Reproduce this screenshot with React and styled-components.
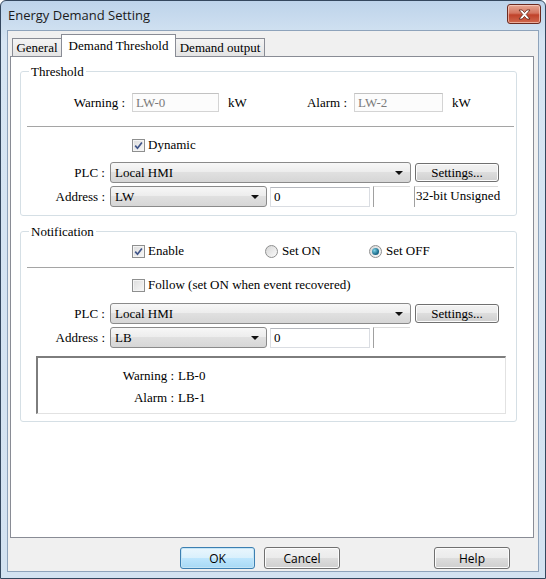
import styled, { createGlobalStyle } from 'styled-components';

const uiFont = `"Open Sans", "Noto Sans", sans-serif`;

const GlobalStyle = createGlobalStyle`
	html, body {
		margin: 0;
		padding: 0;
		background: #fff;
	}
	* {
		box-sizing: border-box;
	}
`;

const Window = styled.div`
	width: 546px;
	height: 579px;
	display: flex;
	flex-direction: column;
	border: 1px solid #34475e;
	border-radius: 6px 6px 0 0;
	background: linear-gradient(#bdd3ea, #d6e5f3 40px, #d3e2f1);
	overflow: hidden;
`;

const TitleBar = styled.div`
	height: 29px;
	flex: none;
	display: flex;
	justify-content: space-between;
	padding: 0 4px 0 7px;
`;

const Title = styled.span`
	font-family: ${uiFont};
	font-size: 13px;
	line-height: 29px;
	color: #1b1b1b;
`;

const CloseButton = styled.div`
	width: 34px;
	height: 20px;
	margin-top: 3px;
	display: flex;
	align-items: center;
	justify-content: center;
	border: 1px solid #6b2a20;
	border-radius: 3px;
	background: linear-gradient(#e6a793, #d47560 45%, #c0422a 55%, #d0694f);
	box-shadow: inset 0 0 0 1px rgba(255, 220, 210, 0.6);
`;

const Client = styled.div`
	flex: 1;
	margin: 0 6px 6px 6px;
	border: 1px solid #8ea3bb;
	background: #f0f0f0;
	display: flex;
	flex-direction: column;
	padding: 3px 4px 0 2px;
	font-family: 'Liberation Serif', 'Times New Roman', serif;
	font-size: 13px;
	color: #000;
`;

const TabStrip = styled.div`
	height: 23px;
	flex: none;
	display: flex;
	align-items: flex-end;
	padding-left: 2px;
	margin-bottom: -1px;
	position: relative;
	z-index: 1;
`;

const Tab = styled.div`
	width: ${(p) => p.$w}px;
	height: ${(p) => (p.$active ? 23 : 18)}px;
	margin-bottom: ${(p) => (p.$active ? 0 : 1)}px;
	display: flex;
	justify-content: center;
	align-items: ${(p) => (p.$active ? 'flex-start' : 'center')};
	padding-top: ${(p) => (p.$active ? 3 : 0)}px;
	border: 1px solid #898c95;
	border-bottom: none;
	border-left-style: ${(p) => (p.$noLeft ? 'none' : 'solid')};
	border-right-style: ${(p) => (p.$noRight ? 'none' : 'solid')};
	background: ${(p) => (p.$active ? '#fff' : 'linear-gradient(#f4f4f4, #e4e4e4)')};
	line-height: 15px;
	white-space: nowrap;
`;

const Panel = styled.div`
	height: 482px;
	flex: none;
	border: 1px solid #898c95;
	background: #fff;
	padding: 7px 16px 0 9px;
`;

const Group = styled.fieldset`
	margin: ${(p) => p.$mt || 0}px 0 0 0;
	padding: 0 0 ${(p) => p.$pb}px 0;
	min-width: 0;
	border: 1px solid #d5dfe5;
	border-radius: 3px;
`;

const Legend = styled.legend`
	margin-left: 8px;
	padding: 0 2px;
	line-height: 15px;
`;

const Row = styled.div`
	display: flex;
	align-items: center;
	height: ${(p) => p.$h || 21}px;
	margin-top: ${(p) => p.$mt || 0}px;
	padding-left: ${(p) => p.$pl || 0}px;
	white-space: nowrap;
`;

const Separator = styled.div`
	height: 2px;
	margin: ${(p) => p.$mt}px 2px 0 6px;
	border-top: 1px solid #a5a5a5;
	border-bottom: 1px solid #fff;
`;

const Label = styled.span`
	width: ${(p) => p.$w}px;
	flex: none;
	text-align: right;
	margin-right: ${(p) => p.$gap ?? 5}px;
`;

const Unit = styled.span`
	width: 20px;
	flex: none;
	margin-left: 9px;
`;

const TextBox = styled.div`
	width: ${(p) => p.$w}px;
	height: ${(p) => p.$h || 19}px;
	flex: none;
	margin-left: ${(p) => p.$ml || 0}px;
	display: flex;
	align-items: center;
	padding-left: 3px;
	background: ${(p) => (p.$disabled ? '#fcfcfc' : '#fff')};
	color: ${(p) => (p.$disabled ? '#7b7b7b' : '#000')};
	border: 1px solid ${(p) => (p.$disabled ? '#d4d4d4' : '#dadde2')};
	border-top-color: ${(p) => (p.$disabled ? '#c2c2c2' : '#b4b7bd')};
`;

const Static = styled.div`
	width: ${(p) => p.$w}px;
	height: 21px;
	flex: none;
	margin-left: ${(p) => p.$ml || 0}px;
	border-left: 1px solid #a0a0a0;
	border-top: 1px solid #dcdcdc;
	line-height: 17px;
	padding-left: 1px;
`;

const Combo = styled.div`
	width: ${(p) => p.$w}px;
	height: 21px;
	flex: none;
	display: flex;
	align-items: center;
	justify-content: space-between;
	padding: 0 7px 0 4px;
	border: 1px solid #8a8a8a;
	border-radius: 3px;
	background: linear-gradient(#f7f7f7, #ececec 50%, #e0e0e0 50%, #d6d6d6);
`;

const Arrow = styled.span`
	width: 0;
	height: 0;
	border-left: 4px solid transparent;
	border-right: 4px solid transparent;
	border-top: 4px solid #111;
`;

const Button = styled.div`
	width: ${(p) => p.$w}px;
	height: ${(p) => p.$h || 22}px;
	flex: none;
	margin-left: ${(p) => (p.$ml === 'auto' ? 'auto' : `${p.$ml || 0}px`)};
	display: flex;
	align-items: center;
	justify-content: center;
	border: 1px solid ${(p) => (p.$primary ? '#3c7fb1' : '#707070')};
	border-radius: 3px;
	background: ${(p) =>
		p.$primary
			? 'linear-gradient(#eaf6fd, #d9f0fc 50%, #bee6fd 50%, #a7d9f5)'
			: 'linear-gradient(#f2f2f2, #ebebeb 50%, #dddddd 50%, #cfcfcf)'};
	box-shadow: inset 0 0 0 1px ${(p) => (p.$primary ? '#c4e5f6' : '#fcfcfc')};
	color: #000;
`;

const DialogButton = styled(Button)`
	font-family: ${uiFont};
	font-size: 12px;
`;

const Option = styled.label`
	display: flex;
	align-items: center;
	width: ${(p) => (p.$w ? `${p.$w}px` : 'auto')};
	flex: none;
`;

const Box = styled.span`
	width: 13px;
	height: 13px;
	flex: none;
	margin-right: 3px;
	display: flex;
	align-items: center;
	justify-content: center;
	border: 1px solid #8e8f8f;
	background: linear-gradient(135deg, #dcdcdc, #f8f8f8);
	box-shadow: inset 0 0 0 1px #f4f4f4;
`;

const Round = styled.span`
	width: 13px;
	height: 13px;
	flex: none;
	margin-right: 4px;
	display: flex;
	align-items: center;
	justify-content: center;
	border: 1px solid #8e8f8f;
	border-radius: 50%;
	background: linear-gradient(135deg, #d6d6d6, #fbfbfb);
`;

const Dot = styled.span`
	width: 7px;
	height: 7px;
	border-radius: 50%;
	background: radial-gradient(circle at 35% 35%, #7fd3e6, #1d6f8f 60%, #0f4a66);
`;

const InfoBox = styled.div`
	width: 470px;
	height: 58px;
	margin: 8px 0 0 15px;
	border-style: solid;
	border-width: 2px 1px 1px 2px;
	border-color: #7d7d7d #e2e2e2 #e2e2e2 #7d7d7d;
	padding-top: 7px;
	display: grid;
	grid-template-columns: 136px auto;
	grid-auto-rows: 22px;
	column-gap: 4px;
	align-items: center;
	align-content: start;
`;

const InfoLabel = styled.span`
	text-align: right;
`;

const ButtonRow = styled.div`
	display: flex;
	margin-top: 9px;
	padding: 0 24px 0 170px;
`;

const Check = ({ checked }) => (
	<Box>
		{checked && (
			<svg width="9" height="9" viewBox="0 0 9 9">
				<path d="M1.2 4.6 L3.5 7.2 L7.9 1.4" stroke="#41568a" strokeWidth="1.7" fill="none" />
			</svg>
		)}
	</Box>
);

const Radio = ({ checked }) => <Round>{checked && <Dot />}</Round>;

const AddressRows = ({ device }) => (
	<>
		<Row $mt={device === 'LW' ? 9 : 10}>
			<Label $w={84}>PLC :</Label>
			<Combo $w={301}>
				<span>Local HMI</span>
				<Arrow />
			</Combo>
			<Button $w={84} $h={19} $ml={4}>
				Settings...
			</Button>
		</Row>
		<Row $mt={3}>
			<Label $w={84}>Address :</Label>
			<Combo $w={157}>
				<span>{device}</span>
				<Arrow />
			</Combo>
			<TextBox $w={100} $h={20} $ml={3}>
				0
			</TextBox>
			<Static $w={37} $ml={3} />
			{device === 'LW' && (
				<Static $w={84} $ml={4}>
					32-bit Unsigned
				</Static>
			)}
		</Row>
	</>
);

function App() {
	return (
		<>
			<GlobalStyle />
			<Window>
				<TitleBar>
					<Title>Energy Demand Setting</Title>
					<CloseButton>
						<svg width="13" height="11" viewBox="0 0 13 11">
							<path
								d="M1 1 H4.2 L6.5 3.6 L8.8 1 H12 L8.2 5.5 L12 10 H8.8 L6.5 7.4 L4.2 10 H1 L4.8 5.5 Z"
								fill="#fff"
								stroke="#5a2418"
								strokeWidth="0.8"
								strokeLinejoin="round"
							/>
						</svg>
					</CloseButton>
				</TitleBar>

				<Client>
					<TabStrip>
						<Tab $w={49} $noRight>
							General
						</Tab>
						<Tab $w={115} $active>
							Demand Threshold
						</Tab>
						<Tab $w={89} $noLeft>
							Demand output
						</Tab>
					</TabStrip>

					<Panel>
						<Group $pb={8}>
							<Legend>Threshold</Legend>
							<Row $h={19} $mt={14}>
								<Label $w={104} $gap={7}>
									Warning :
								</Label>
								<TextBox $w={87} $disabled>
									LW-0
								</TextBox>
								<Unit>kW</Unit>
								<Label $w={99} $gap={7}>
									Alarm :
								</Label>
								<TextBox $w={89} $disabled>
									LW-2
								</TextBox>
								<Unit>kW</Unit>
							</Row>
							<Separator $mt={14} />
							<Row $h={16} $mt={9} $pl={111}>
								<Option>
									<Check checked />
									Dynamic
								</Option>
							</Row>
							<AddressRows device="LW" />
						</Group>

						<Group $mt={8} $pb={7}>
							<Legend>Notification</Legend>
							<Row $h={16} $mt={4} $pl={111}>
								<Option $w={133}>
									<Check checked />
									Enable
								</Option>
								<Option $w={104}>
									<Radio />
									Set ON
								</Option>
								<Option>
									<Radio checked />
									Set OFF
								</Option>
							</Row>
							<Separator $mt={8} />
							<Row $h={16} $mt={8} $pl={111}>
								<Option>
									<Check />
									Follow (set ON when event recovered)
								</Option>
							</Row>
							<AddressRows device="LB" />
							<InfoBox>
								<InfoLabel>Warning :</InfoLabel>
								<span>LB-0</span>
								<InfoLabel>Alarm :</InfoLabel>
								<span>LB-1</span>
							</InfoBox>
						</Group>
					</Panel>

					<ButtonRow>
						<DialogButton $w={75} $primary>
							OK
						</DialogButton>
						<DialogButton $w={76} $ml={9}>
							Cancel
						</DialogButton>
						<DialogButton $w={76} $ml="auto">
							Help
						</DialogButton>
					</ButtonRow>
				</Client>
			</Window>
		</>
	);
}

export default App;
